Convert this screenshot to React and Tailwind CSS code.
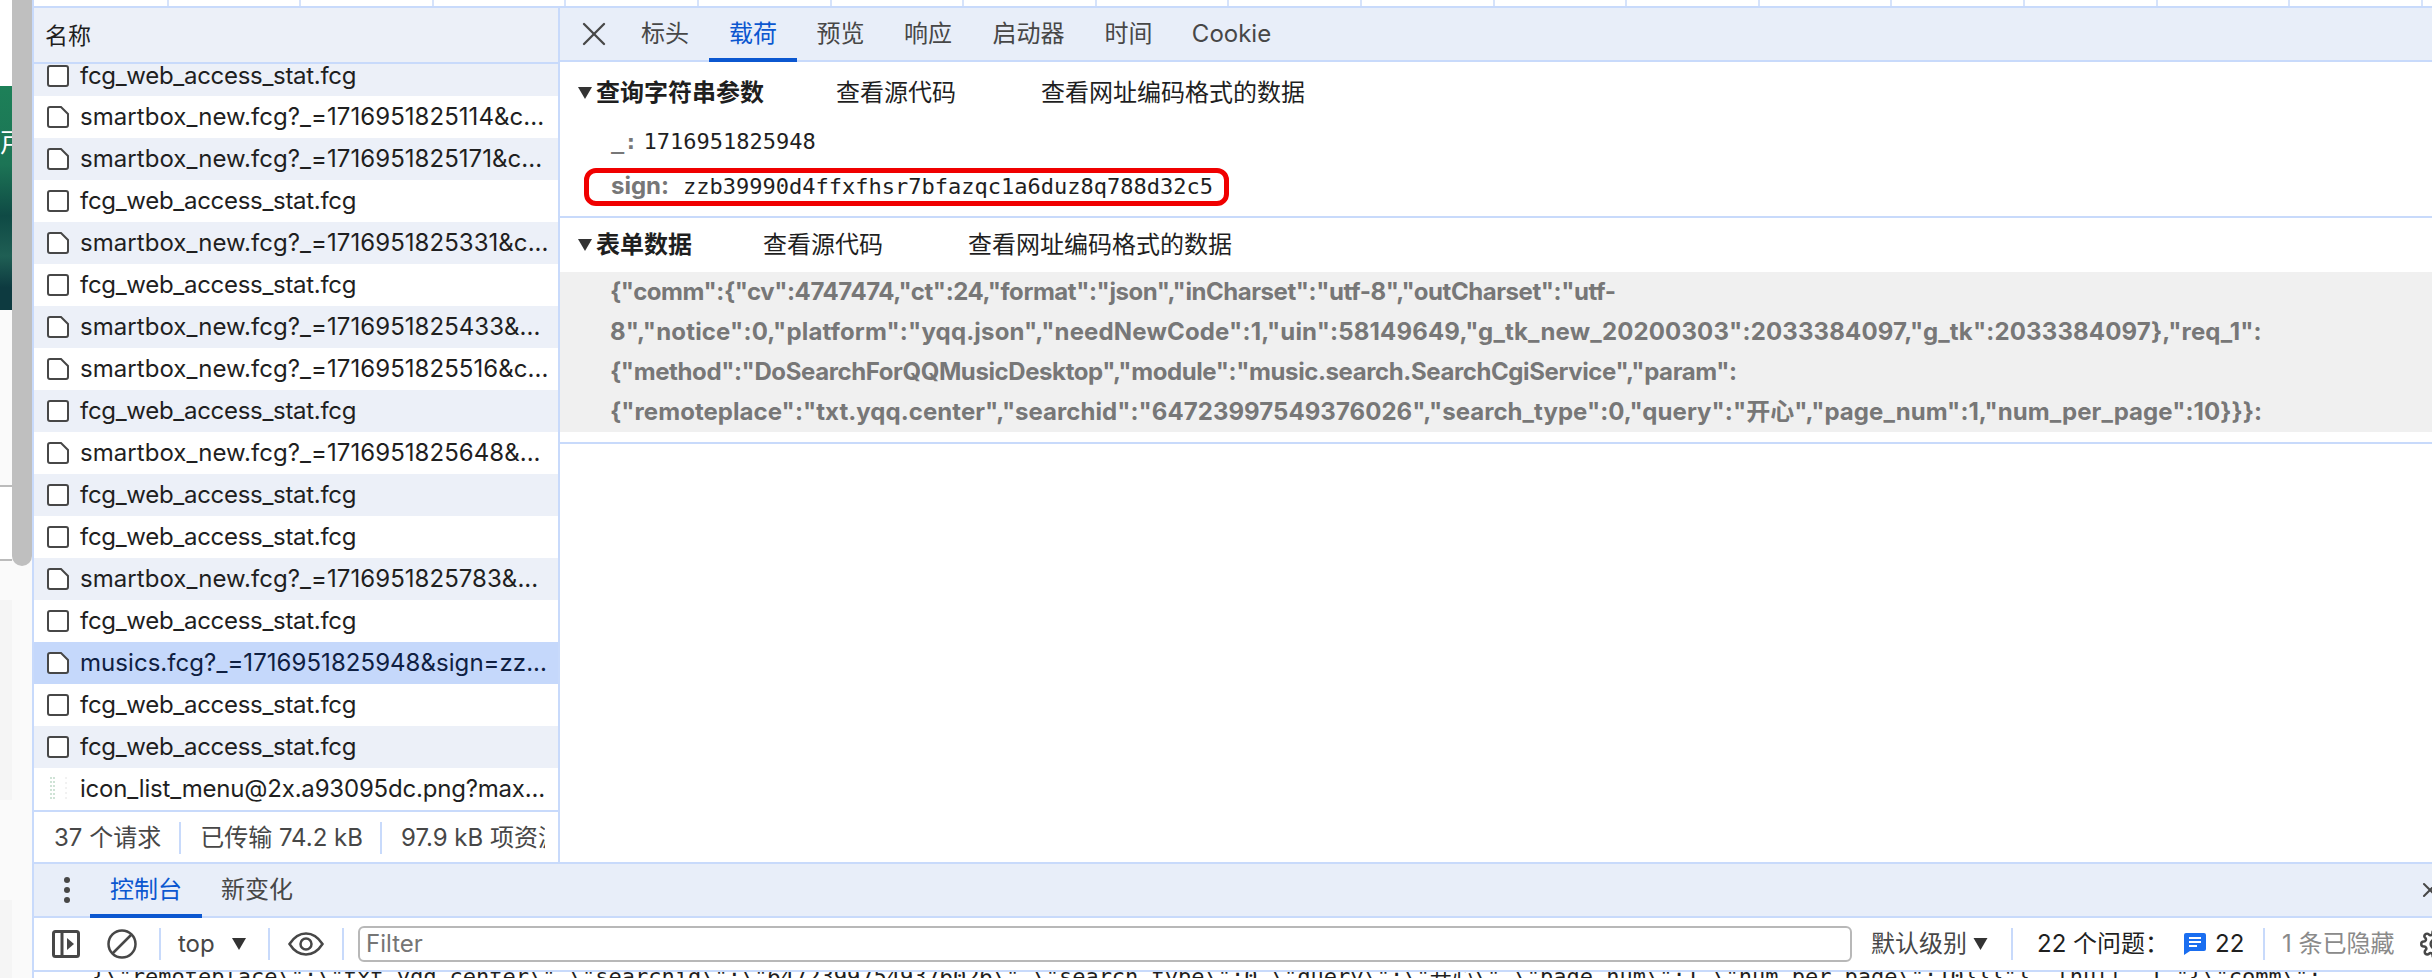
import { X } from "lucide-react";

const sans = "font-['Inter','Noto_Sans_CJK_SC',sans-serif]";

const requests = [
  { name: "fcg_web_access_stat.fcg", icon: "empty" },
  { name: "smartbox_new.fcg?_=1716951825114&c...", icon: "file" },
  { name: "smartbox_new.fcg?_=1716951825171&c...", icon: "file" },
  { name: "fcg_web_access_stat.fcg", icon: "empty" },
  { name: "smartbox_new.fcg?_=1716951825331&c...", icon: "file" },
  { name: "fcg_web_access_stat.fcg", icon: "empty" },
  { name: "smartbox_new.fcg?_=1716951825433&...", icon: "file" },
  { name: "smartbox_new.fcg?_=1716951825516&c...", icon: "file" },
  { name: "fcg_web_access_stat.fcg", icon: "empty" },
  { name: "smartbox_new.fcg?_=1716951825648&...", icon: "file" },
  { name: "fcg_web_access_stat.fcg", icon: "empty" },
  { name: "fcg_web_access_stat.fcg", icon: "empty" },
  { name: "smartbox_new.fcg?_=1716951825783&...", icon: "file" },
  { name: "fcg_web_access_stat.fcg", icon: "empty" },
  { name: "musics.fcg?_=1716951825948&sign=zz...", icon: "file", selected: true },
  { name: "fcg_web_access_stat.fcg", icon: "empty" },
  { name: "fcg_web_access_stat.fcg", icon: "empty" },
  { name: "icon_list_menu@2x.a93095dc.png?max...", icon: "sprite" },
];

const detailTabs = [
  { label: "标头", cls: "w-[88px]" },
  { label: "载荷", cls: "w-[88px]", active: true },
  { label: "预览", cls: "w-[87px]" },
  { label: "响应", cls: "w-[88px]" },
  { label: "启动器", cls: "w-[113px]" },
  { label: "时间", cls: "w-[87px]" },
  { label: "Cookie", cls: "w-[119px]" },
];

const formLines = [
  { text: '{"comm":{"cv":4747474,"ct":24,"format":"json","inCharset":"utf-8","outCharset":"utf-', cls: "tracking-[-0.44px]" },
  { text: '8","notice":0,"platform":"yqq.json","needNewCode":1,"uin":58149649,"g_tk_new_20200303":2033384097,"g_tk":2033384097},"req_1":', cls: "tracking-[0.16px]" },
  { text: '{"method":"DoSearchForQQMusicDesktop","module":"music.search.SearchCgiService","param":', cls: "tracking-[-0.4px]" },
  { text: '{"remoteplace":"txt.yqq.center","searchid":"64723997549376026","search_type":0,"query":"开心","page_num":1,"num_per_page":10}}}:', cls: "tracking-[0.05px]" },
];

function RowIcon({ type }) {
  if (type === "sprite") {
    return (
      <svg width="24" height="26" viewBox="0 0 24 26" className="shrink-0">
        <path d="M5 1v24M8 1v24" stroke="#cfe3d6" strokeWidth="2" strokeDasharray="2 2" />
        <path d="M20 1v24" stroke="#e4e4e4" strokeWidth="1" strokeDasharray="2 3" />
      </svg>
    );
  }
  return (
    <svg width="24" height="24" viewBox="0 0 24 24" fill="none" className="shrink-0">
      {type === "file" ? (
        <path d="M4 2h11l7 7v11a2 2 0 0 1-2 2H4a2 2 0 0 1-2-2V4a2 2 0 0 1 2-2z" stroke="#474747" strokeWidth="2" fill="#fff" />
      ) : (
        <rect x="2" y="2" width="20" height="20" rx="2" stroke="#474747" strokeWidth="2" fill="#fff" />
      )}
    </svg>
  );
}

function Triangle({ className }) {
  return (
    <svg viewBox="0 0 14 12" className={`shrink-0 ${className}`}>
      <path d="M0 0h14L7 12z" fill="currentColor" />
    </svg>
  );
}

function SectionHead({ title, gap, gap2 }) {
  return (
    <div className="flex items-center text-[24px] leading-[32px] text-[#1f1f1f]">
      <Triangle className="w-[14px] h-[12px] mr-[4px] text-[#333]" />
      <span className={`font-bold ${gap}`}>{title}</span>
      <span className={gap2}>查看源代码</span>
      <span>查看网址编码格式的数据</span>
    </div>
  );
}

function Divider({ className = "" }) {
  return <div className={`w-[2px] h-[32px] bg-[#c8dafb] shrink-0 ${className}`} />;
}

export default function App() {
  return (
    <div className={`flex w-[2432px] h-[978px] overflow-hidden bg-white ${sans}`}>
      {/* page behind devtools */}
      <div className="w-[12px] shrink-0 flex flex-col overflow-hidden">
        <div className="h-[86px] shrink-0 bg-white" />
        <div className="relative h-[224px] shrink-0 overflow-hidden bg-[linear-gradient(180deg,#1d8058_0%,#1c7455_35%,#0f4a45_58%,#1f5f54_76%,#0d3a40_90%,#0d3a40_100%)]">
          <span className="absolute left-0 top-[42px] text-[26px] leading-[30px] text-white">戸</span>
        </div>
        <div className="h-[175px] shrink-0 bg-[#fafafa]" />
        <div className="h-[76px] shrink-0 bg-white border-y-2 border-[#bbbbbb]" />
        <div className="h-[39px] shrink-0 bg-[#fafafa]" />
        <div className="h-[200px] shrink-0 bg-[#f5f5f5]" />
        <div className="h-[100px] shrink-0 bg-[#fafafa]" />
        <div className="grow bg-[#f5f5f5]" />
      </div>
      <div className="w-[20px] shrink-0 flex flex-col bg-[#fafafa]">
        <div className="h-[566px] bg-[#bfbfbf] rounded-b-[10px]" />
      </div>

      {/* devtools */}
      <div className="grow min-w-0 flex flex-col border-l-2 border-[#c8dafb]">
        {/* timeline ruler */}
        <div className="h-[6px] shrink-0 flex pl-[2px]">
          {Array.from({ length: 18 }, (_, i) => (
            <div key={i} className="w-[132.6px] shrink-0 border-r-2 border-[#d6e3fb]" />
          ))}
        </div>

        <div className="h-[856px] shrink-0 flex border-t-2 border-[#c8dafb]">
          {/* request list */}
          <div className="w-[526px] shrink-0 flex flex-col border-r-2 border-[#c8dafb]">
            <div className="h-[52px] pt-[2px] shrink-0 flex items-center pl-[11px] text-[23px] bg-[#ecf0f8] text-[#1f1f1f] border-b-2 border-[#c8dafb] box-content">
              名称
            </div>
            <div className="h-[746px] shrink-0 overflow-hidden">
              {requests.map((r, i) => (
                <div
                  key={i}
                  className={`flex items-center gap-[10px] pl-[12px] text-[24px] whitespace-nowrap ${
                    i === 0 ? "h-[32px] pb-[8px] leading-[24px]" : "h-[42px]"
                  } ${r.icon === "empty" ? "tracking-[-0.3px]" : r.icon === "sprite" ? "tracking-[-0.2px]" : "tracking-[0.05px]"} ${
                    r.selected
                      ? "bg-[#c5d8fb] text-[#0f2042]"
                      : i % 2 === 0
                        ? "bg-[#ecf0f8] text-[#1f1f1f]"
                        : "bg-white text-[#1f1f1f]"
                  }`}
                >
                  <RowIcon type={r.icon} />
                  <span>{r.name}</span>
                </div>
              ))}
            </div>
            <div className="h-[54px] shrink-0 flex items-center pl-[20px] pr-[13px] text-[24px] text-[#474747] border-t-2 border-[#c8dafb] overflow-hidden whitespace-nowrap">
              <span>37 个请求</span>
              <Divider className="ml-[18px] mr-[19px]" />
              <span>已传输 74.2 kB</span>
              <Divider className="ml-[17px] mr-[19px]" />
              <span className="min-w-0 overflow-hidden">97.9 kB 项资源</span>
            </div>
          </div>

          {/* detail pane */}
          <div className="grow min-w-0 flex flex-col">
            <div className="h-[52px] shrink-0 flex items-center bg-[#e8eef9] border-b-2 border-[#c8dafb] box-content text-[24px] text-[#474747]">
              <div className="w-[61px] shrink-0 flex justify-center pl-[7px]">
                <X size={40} strokeWidth={1.4} color="#474747" />
              </div>
              {detailTabs.map((t) => (
                <div
                  key={t.label}
                  className={`relative h-full flex items-center justify-center shrink-0 ${t.cls} ${t.active ? "text-[#0b57d0]" : ""}`}
                >
                  {t.label}
                  {t.active && <div className="absolute left-0 right-0 -bottom-[2px] h-[4px] bg-[#0b57d0]" />}
                </div>
              ))}
            </div>

            <div className="h-[156px] shrink-0 pt-[15px] pl-[18px] border-b-2 border-[#c8dafb]">
              <SectionHead title="查询字符串参数" gap="mr-[72px]" gap2="mr-[85px]" />
              <div className="mt-[16px] h-[32px] flex items-center pl-[33px] font-['DejaVu_Sans_Mono',monospace] text-[22px] text-[#1f1f1f]">
                <span className="text-[#777] font-bold mr-[6px]">_:</span>
                <span>1716951825948</span>
              </div>
              <div className="relative mt-[13px] h-[32px] flex items-center pl-[33px] font-['DejaVu_Sans_Mono',monospace] text-[22px] text-[#1f1f1f]">
                <span className={`text-[#777] text-[24px] font-bold mr-[14px] ${sans}`}>sign:</span>
                <span>zzb39990d4ffxfhsr7bfazqc1a6duz8q788d32c5</span>
                <div className="absolute left-[6px] top-[-2px] w-[645px] h-[38px] border-[5px] border-[#f00000] rounded-[12px]" />
              </div>
            </div>

            <div className="h-[226px] shrink-0 border-b-2 border-[#c8dafb]">
              <div className="h-[54px] flex items-center pl-[18px]">
                <SectionHead title="表单数据" gap="mr-[71px]" gap2="mr-[85px]" />
              </div>
              <div className="h-[160px] bg-[#f0f0f0] pl-[50px] text-[24px] leading-[40px] font-bold text-[#777] whitespace-nowrap">
                {formLines.map((line) => (
                  <div key={line.text} className={line.cls}>{line.text}</div>
                ))}
              </div>
            </div>
          </div>
        </div>

        {/* console drawer */}
        <div className="h-[52px] shrink-0 flex items-center bg-[#e8eef9] border-t-2 border-[#c8dafb] border-b-2 box-content text-[24px] text-[#474747]">
          <div className="w-[56px] shrink-0 flex flex-col items-center gap-[4px] pl-[9px]">
            <div className="w-[6px] h-[6px] rounded-full bg-[#474747]" />
            <div className="w-[6px] h-[6px] rounded-full bg-[#474747]" />
            <div className="w-[6px] h-[6px] rounded-full bg-[#474747]" />
          </div>
          <div className="relative h-full w-[112px] flex items-center justify-center text-[#0b57d0]">
            控制台
            <div className="absolute left-0 right-0 -bottom-[2px] h-[4px] bg-[#0b57d0]" />
          </div>
          <div className="ml-[19px]">新变化</div>
          <div className="ml-auto mr-[-10px]">
            <X size={24} strokeWidth={2} color="#474747" />
          </div>
        </div>

        <div className="h-[52px] shrink-0 flex items-center text-[#474747] text-[24px] whitespace-nowrap border-b-2 border-[#c8dafb] box-content">
          <svg width="28" height="28" viewBox="0 0 28 28" fill="none" className="ml-[18px] shrink-0">
            <rect x="1.5" y="1.5" width="25" height="25" rx="2" stroke="#474747" strokeWidth="3" />
            <path d="M10 2v24" stroke="#474747" strokeWidth="3" />
            <path d="M15 8l7 6-7 6z" fill="#474747" />
          </svg>
          <svg width="30" height="30" viewBox="0 0 30 30" fill="none" className="ml-[27px] shrink-0">
            <circle cx="15" cy="15" r="13.5" stroke="#474747" strokeWidth="2.5" />
            <path d="M6 24L24 6" stroke="#474747" strokeWidth="2.5" />
          </svg>
          <Divider className="ml-[22px]" />
          <span className="ml-[17px] w-[36px]">top</span>
          <Triangle className="w-[14px] h-[12px] ml-[18px] text-[#333]" />
          <Divider className="ml-[22px]" />
          <svg width="36" height="24" viewBox="0 0 36 24" fill="none" className="ml-[18px] shrink-0">
            <path d="M1.5 12C6 5 11.500 1.500 18 1.500S30 5 34.500 12C30 19 24.500 22.500 18 22.500S6 19 1.500 12z" stroke="#474747" strokeWidth="2.500" />
            <circle cx="18" cy="12" r="5.500" stroke="#474747" strokeWidth="2.500" />
          </svg>
          <Divider className="ml-[18px]" />
          <div className="ml-[14px] w-[1494px] h-[36px] shrink-0 flex items-center pl-[6px] border-2 border-[#b8b8b8] rounded-[6px] text-[#757575]">
            Filter
          </div>
          <span className="ml-[19px] w-[96px]">默认级别</span>
          <Triangle className="w-[15px] h-[12px] ml-[6px] text-[#333]" />
          <Divider className="ml-[23px]" />
          <span className="ml-[24px] w-[125px] text-[#1f1f1f]">22 个问题：</span>
          <svg width="22" height="22" viewBox="0 0 22 22" className="ml-[22px] shrink-0">
            <path d="M2 0h18a2 2 0 0 1 2 2v14a2 2 0 0 1-2 2H6l-6 4V2a2 2 0 0 1 2-2z" fill="#1a6ef0" />
            <path d="M5 5h12M5 9h12M5 13h8" stroke="#fff" strokeWidth="2" />
          </svg>
          <span className="ml-[9px] w-[28px] text-[#1f1f1f]">22</span>
          <Divider className="ml-[20px]" />
          <span className="ml-[17px] w-[115px] text-[#8a8a8a]">1 条已隐藏</span>
          <svg width="30" height="30" viewBox="0 0 24 24" fill="none" stroke="#474747" strokeWidth="2" className="ml-[25px] shrink-0">
            <circle cx="12" cy="12" r="3.500" />
            <path d="M19.400 15a1.650 1.650 0 0 0 .33 1.820l.06.06a2 2 0 1 1-2.830 2.830l-.06-.06a1.650 1.650 0 0 0-2.820 1.170V21a2 2 0 1 1-4 0v-.09a1.650 1.650 0 0 0-2.820-1.170l-.06.06a2 2 0 1 1-2.830-2.830l.06-.06A1.650 1.650 0 0 0 3.090 14H3a2 2 0 1 1 0-4h.09a1.650 1.650 0 0 0 1.170-2.820l-.06-.06a2 2 0 1 1 2.830-2.830l.06.06A1.650 1.650 0 0 0 10 3.090V3a2 2 0 1 1 4 0v.09a1.650 1.650 0 0 0 2.820 1.170l.06-.06a2 2 0 1 1 2.830 2.830l-.06.06A1.650 1.650 0 0 0 20.910 10H21a2 2 0 1 1 0 4h-.09a1.650 1.650 0 0 0-1.510 1z" />
          </svg>
        </div>

        <div className="h-[6px] overflow-hidden pl-[58px] font-['DejaVu_Sans_Mono','Noto_Sans_CJK_SC',monospace] text-[22px] leading-[26px] text-[#1f1f1f] whitespace-nowrap">
          <div className="-mt-[8px]">
            {'{\\"remoteplace\\":\\"txt.yqq.center\\",\\"searchid\\":\\"64723997549376026\\",\\"search_type\\":0,\\"query\\":\\"开心\\",\\"page_num\\":1,\\"num_per_page\\":10}}}"}, [null, 1,"{\\"comm\\":'}
          </div>
        </div>
      </div>
    </div>
  );
}
